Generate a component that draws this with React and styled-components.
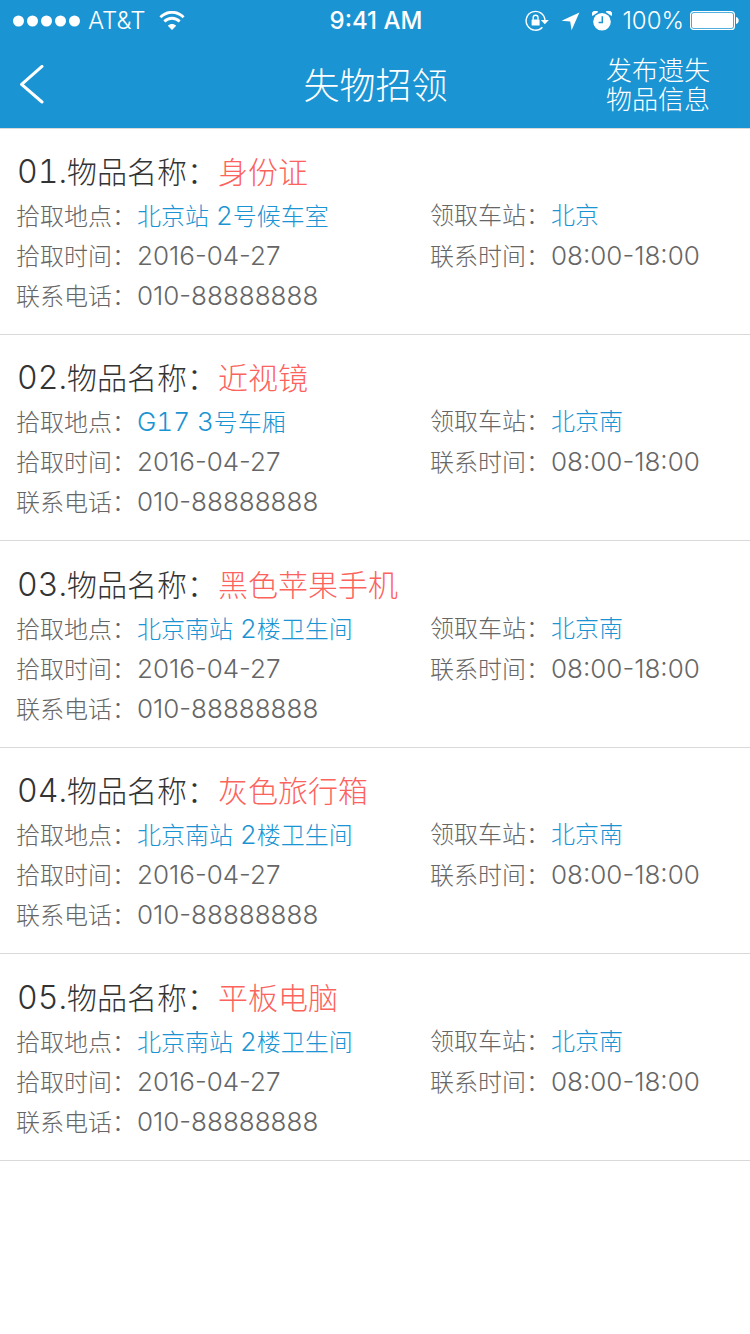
// App.jsx
import React from 'react';
import styled, { createGlobalStyle } from 'styled-components';

const GlobalStyle = createGlobalStyle`
  * {
    box-sizing: border-box;
  }

  body {
    margin: 0;
    background: #ffffff;
    font-family: Inter, "Noto Sans CJK SC", sans-serif;
    font-weight: 300;
  }
`;

// Styled Components
const Header = styled.header`
  background: #1a94d2;
  color: #ffffff;
  box-shadow: 0 1px 0 #d9d9d9;
`;

const StatusBar = styled.div`
  display: grid;
  grid-template-columns: 1fr auto 1fr;
  align-items: center;
  height: 42px;
  padding: 0 11px 0 13px;
  font-size: 24px;
  font-weight: 350;
  line-height: 40px;
`;

const StatusGroup = styled.div`
  display: flex;
  align-items: center;
  justify-content: ${({ $end }) => ($end ? 'flex-end' : 'flex-start')};
  gap: ${({ $gap }) => $gap}px;
`;

const Clock = styled.time`
  font-weight: 500;
`;

const Icon = styled.svg`
  display: block;
  flex: none;
`;

const NavBar = styled.nav`
  display: grid;
  grid-template-columns: 1fr auto 1fr;
  align-items: center;
  height: 86px;
  padding: 0 40px 0 19px;
`;

const NavButton = styled.button`
  justify-self: ${({ $end }) => ($end ? 'end' : 'start')};
  padding: 0;
  border: 0;
  background: none;
  color: inherit;
  font: inherit;
  font-size: 26px;
  line-height: 29px;
  cursor: pointer;
`;

const NavTitle = styled.h1`
  margin: 0;
  padding: 2px 0 0 22px;
  font-size: 36px;
  font-weight: inherit;
  line-height: 44px;
`;

const ItemList = styled.ul`
  margin: 0;
  padding: 0;
  list-style: none;
`;

const Item = styled.li`
  padding: 21px 16px 18px;
  border-bottom: 1px solid #d9d9d9;

  &:nth-child(odd) {
    padding-top: 22px;
  }
`;

const ItemTitle = styled.h2`
  display: flex;
  gap: 1px;
  margin: 0 0 2px;
  padding-left: 1px;
  color: #333333;
  font-size: 30px;
  font-weight: inherit;
  line-height: 44px;
`;

const ItemName = styled.span`
  color: #fc635d;
`;

const Details = styled.dl`
  display: grid;
  grid-template-columns: minmax(0, 1fr) 304px;
  margin: 0;
  color: #666666;
  font-size: 24px;
  line-height: 40px;
`;

const Field = styled.div`
  display: flex;
  align-items: baseline;
  gap: 1px;
  grid-column: ${({ $column }) => $column};
  height: 40px;
  white-space: nowrap;
`;

const Value = styled.dd`
  margin: 0;
  color: ${({ $highlight }) => ($highlight ? '#1a94d2' : 'inherit')};
  font-variant-numeric: ${({ $highlight }) => ($highlight ? 'tabular-nums' : 'normal')};
`;

// digits and latin letters run a little larger than the chinese text
const Latin = styled.span`
  font-size: 26px;
`;

const ItemNumber = styled.span`
  font-size: 32px;
  font-variant-numeric: tabular-nums;
`;

const items = [
  { no: '01', name: '身份证', place: '北京站 2号候车室', station: '北京' },
  { no: '02', name: '近视镜', place: 'G17 3号车厢', station: '北京南' },
  { no: '03', name: '黑色苹果手机', place: '北京南站 2楼卫生间', station: '北京南' },
  { no: '04', name: '灰色旅行箱', place: '北京南站 2楼卫生间', station: '北京南' },
  { no: '05', name: '平板电脑', place: '北京南站 2楼卫生间', station: '北京南' },
];

const SignalIcon = () => (
  <Icon width="67" height="12" viewBox="0 0 67 12" fill="currentColor">
    {[0, 1, 2, 3, 4].map((n) => (
      <circle key={n} cx={5.5 + n * 14} cy="6" r="5.5" />
    ))}
  </Icon>
);

const WifiIcon = () => (
  <Icon width="26" height="20" viewBox="0 0 26 20" fill="none" stroke="currentColor">
    <path d="M1.4 6.2C8.2-.4 17.8-.4 24.6 6.2" strokeWidth="2.8" />
    <path d="M5.3 10.4c4.6-4.2 10.8-4.2 15.4 0" strokeWidth="2.8" />
    <path d="M13 19l-4.2-4.3c2.4-2.3 6-2.3 8.4 0z" fill="currentColor" stroke="none" />
  </Icon>
);

const RotationLockIcon = () => (
  <Icon width="24" height="22" viewBox="0 0 24 22" fill="none" stroke="currentColor">
    <path d="M17.4 17.2A9.4 9.4 0 1 1 19.9 10" strokeWidth="1.4" />
    <path d="M15.8 10h8l-4 4.2z" fill="currentColor" stroke="none" />
    <rect x="6.6" y="9.4" width="8" height="6" rx=".5" fill="currentColor" stroke="none" />
    <path d="M8.2 9.8V7.6a2.4 2.4 0 0 1 4.8 0v2.2" strokeWidth="1.4" />
  </Icon>
);

const LocationIcon = () => (
  <Icon width="19" height="19" viewBox="0 0 19 19" fill="currentColor">
    <path d="M18.4.4L10.6 18.2 9.2 9.6.6 8.8z" />
  </Icon>
);

const AlarmIcon = () => (
  <Icon width="20" height="20" viewBox="0 0 20 20" fill="currentColor">
    <path d="M.5 5A3.4 3.4 0 0 1 6.3 1.1zM19.5 5a3.4 3.4 0 0 0-5.8-3.9z" />
    <circle cx="10" cy="10.8" r="8.8" />
    <path d="M10.3 5.2v6.2H6.6" fill="none" stroke="#1a94d2" strokeWidth="1.5" />
  </Icon>
);

const BatteryIcon = () => (
  <Icon width="49" height="20" viewBox="0 0 49 20" fill="currentColor">
    <rect x=".6" y=".6" width="43.8" height="17.8" rx="3" fill="none" stroke="currentColor" strokeWidth="1.2" />
    <rect x="2" y="2" width="41" height="15" rx="1.6" />
    <path d="M46 6c3.6.8 3.6 6.2 0 7z" />
  </Icon>
);

const BackIcon = () => (
  <Icon width="26" height="40" viewBox="0 0 26 40" fill="none" stroke="currentColor">
    <path d="M23 1.4L2.6 19.4 23 37" strokeWidth="3" strokeLinecap="round" strokeLinejoin="round" />
  </Icon>
);

const MixedText = ({ children }) =>
  children
    .split(/([\x20-\x7e]+)/)
    .filter(Boolean)
    .map((part, index) => (/^[\x20-\x7e]/.test(part) ? <Latin key={index}>{part}</Latin> : part));

const DetailField = ({ label, value, column, highlight }) => (
  <Field $column={column}>
    <dt>{label}：</dt>
    <Value $highlight={highlight}>
      <MixedText>{value}</MixedText>
    </Value>
  </Field>
);

const LostItem = ({ no, name, place, station }) => (
  <Item>
    <ItemTitle>
      <span>
        <ItemNumber>{no}.</ItemNumber>
        物品名称：
      </span>
      <ItemName>{name}</ItemName>
    </ItemTitle>
    <Details>
      <DetailField column={1} label="拾取地点" value={place} highlight />
      <DetailField column={2} label="领取车站" value={station} highlight />
      <DetailField column={1} label="拾取时间" value="2016-04-27" />
      <DetailField column={2} label="联系时间" value="08:00-18:00" />
      <DetailField column={1} label="联系电话" value="010-88888888" />
    </Details>
  </Item>
);

const App = () => {
  return (
    <>
      <GlobalStyle />
      <Header>
        <StatusBar>
          <StatusGroup $gap={14}>
            <StatusGroup $gap={8}>
              <SignalIcon />
              <span>AT&amp;T</span>
            </StatusGroup>
            <WifiIcon />
          </StatusGroup>
          <Clock>9:41 AM</Clock>
          <StatusGroup $gap={10} $end>
            <StatusGroup $gap={12}>
              <RotationLockIcon />
              <LocationIcon />
              <AlarmIcon />
            </StatusGroup>
            <StatusGroup $gap={6}>
              <span>100%</span>
              <BatteryIcon />
            </StatusGroup>
          </StatusGroup>
        </StatusBar>
        <NavBar>
          <NavButton type="button" aria-label="返回">
            <BackIcon />
          </NavButton>
          <NavTitle>失物招领</NavTitle>
          <NavButton type="button" $end>
            发布遗失
            <br />
            物品信息
          </NavButton>
        </NavBar>
      </Header>
      <main>
        <ItemList>
          {items.map((item) => (
            <LostItem key={item.no} {...item} />
          ))}
        </ItemList>
      </main>
    </>
  );
};

export default App;
